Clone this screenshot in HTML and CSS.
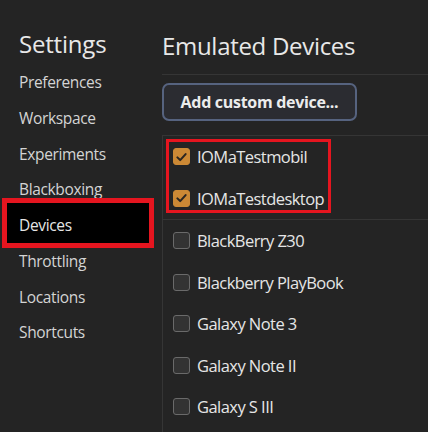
FILE: index.html
```html
<!DOCTYPE html>
<html lang="en">
<head>
<meta charset="utf-8">
<title>Settings - Devices</title>
<link rel="stylesheet" href="styles.css">
</head>
<body>
<div class="app">
  <aside class="sidebar">
    <h1 class="title">Settings</h1>
    <nav class="nav">
      <div class="nav-item">Preferences</div>
      <div class="nav-item">Workspace</div>
      <div class="nav-item">Experiments</div>
      <div class="nav-item">Blackboxing</div>
      <div class="nav-item selected"><span class="label">Devices</span></div>
      <div class="nav-item">Throttling</div>
      <div class="nav-item">Locations</div>
      <div class="nav-item">Shortcuts</div>
    </nav>
  </aside>
  <main class="content">
    <header class="header"><h2 class="heading">Emulated Devices</h2></header>
    <div class="actions"><button class="btn" type="button">Add custom device...</button></div>
    <div class="list">
      <div class="group custom">
        <div class="row"><span class="cb checked"><svg viewBox="0 0 16 16" width="16" height="16"><path d="M3.6 8.4 L6.6 11.3 L12.4 4.9" fill="none" stroke="#2b2621" stroke-width="2.2" stroke-linecap="round" stroke-linejoin="round"/></svg></span><span class="name">IOMaTestmobil</span></div>
        <div class="row"><span class="cb checked"><svg viewBox="0 0 16 16" width="16" height="16"><path d="M3.6 8.4 L6.6 11.3 L12.4 4.9" fill="none" stroke="#2b2621" stroke-width="2.2" stroke-linecap="round" stroke-linejoin="round"/></svg></span><span class="name">IOMaTestdesktop</span></div>
      </div>
      <div class="group">
        <div class="row"><span class="cb"></span><span class="name">BlackBerry Z30</span></div>
        <div class="row"><span class="cb"></span><span class="name">Blackberry PlayBook</span></div>
        <div class="row"><span class="cb"></span><span class="name">Galaxy Note 3</span></div>
        <div class="row"><span class="cb"></span><span class="name">Galaxy Note II</span></div>
        <div class="row"><span class="cb"></span><span class="name">Galaxy S III</span></div>
      </div>
    </div>
  </main>
</div>
</body>
</html>
```
FILE: styles.css
```css
html, body {
  margin: 0;
  padding: 0;
  height: 100%;
  overflow: hidden;
}
body {
  background: #242424;
  color: #e3e3e3;
  font-family: "Open Sans", "Noto Sans", "DejaVu Sans", sans-serif;
}
.app {
  display: flex;
  height: 432px;
}
.sidebar {
  width: 162px;
  flex: none;
}
.title {
  margin: 0;
  padding: 26px 0 0 19px;
  height: 39px;
  font-size: 24px;
  font-weight: 400;
  line-height: 36px;
  color: #e8e8e8;
  letter-spacing: -0.2px;
}
.nav {
  display: flex;
  flex-direction: column;
}
.nav-item {
  height: 35.75px;
  line-height: 35.75px;
  padding-left: 19px;
  font-size: 15.5px;
  color: #d4d4d4;
  letter-spacing: -0.35px;
  position: relative;
}
.nav-item.selected::before {
  content: "";
  position: absolute;
  top: -10px;
  bottom: -4px;
  left: 2px;
  width: 142px;
  background: #000;
  border: 5px solid #e5151f;
}
.nav-item .label {
  position: relative;
  color: #e6e6e6;
}
.content {
  flex: 1;
  display: flex;
  flex-direction: column;
  min-width: 0;
}
.header {
  height: 75px;
  border-bottom: 1px solid #353535;
  box-sizing: border-box;
}
.heading {
  margin: 0;
  padding-top: 28px;
  font-size: 24px;
  font-weight: 400;
  line-height: 36px;
  color: #e8e8e8;
  letter-spacing: -0.3px;
}
.actions {
  padding: 8px 0 0 0;
  height: 60px;
  box-sizing: border-box;
}
.btn {
  height: 38px;
  width: 195px;
  border: 2px solid #56637f;
  border-radius: 7px;
  background: #2b2c31;
  color: #ececec;
  font-family: "Open Sans", "Noto Sans", sans-serif;
  font-weight: 700;
  font-size: 16px;
  letter-spacing: -0.3px;
  padding: 0;
  margin: 0;
}
.list {
  flex: 1;
  border-top: 1px solid #353535;
  border-left: 1px solid #353535;
  display: flex;
  flex-direction: column;
}
.group.custom {
  position: relative;
  border-bottom: 1px solid #353535;
}
.group.custom::after {
  content: "";
  position: absolute;
  top: 3px;
  left: 3px;
  width: 159px;
  height: 68px;
  border: 3px solid #e5151f;
}
.row {
  height: 41.5px;
  display: flex;
  align-items: center;
  padding-left: 10px;
}
.cb {
  width: 15px;
  height: 15px;
  border: 1px solid #6a6a6a;
  border-radius: 3px;
  background: #333333;
  flex: none;
  display: flex;
  align-items: center;
  justify-content: center;
}
.cb.checked {
  background: #cc8935;
  border-color: #cc8935;
}
.name {
  margin-left: 7px;
  font-size: 16.5px;
  color: #e6e6e6;
  letter-spacing: -0.55px;
}
```
